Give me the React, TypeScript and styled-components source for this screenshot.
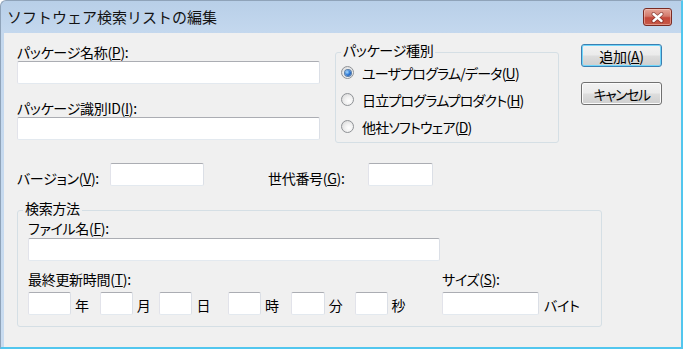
import styled, { createGlobalStyle } from 'styled-components';

const GlobalStyle = createGlobalStyle`
  html, body {
    margin: 0;
    padding: 0;
    background: #ffffff;
  }
  body {
    font-family: "Noto Sans CJK JP", "Noto Sans", sans-serif;
    color: #000000;
  }
`;

const Page = styled.div`
  width: 685px;
  height: 351px;
  overflow: hidden;
  background: #ffffff;
`;

const Window = styled.div`
  box-sizing: border-box;
  width: 683px;
  height: 349px;
  display: flex;
  flex-direction: column;
  background: linear-gradient(180deg, #b8cfe8 0px, #c4d8ee 32px, #c9dcf0 100%);
  border-left: 1px solid #8fa3b9;
  border-top: 1px solid #8fa3b9;
  border-right: 2px solid #52c6ee;
  border-bottom: 2px solid #52c6ee;
  border-top-left-radius: 6px;
`;

const TitleBar = styled.div`
  box-sizing: border-box;
  height: 32px;
  flex: none;
  display: flex;
  justify-content: space-between;
  align-items: flex-start;
  padding: 7px 9px 0 6px;
`;

const Caption = styled.div`
  font-size: 15px;
  line-height: 18px;
  color: #141414;
`;

const CloseButton = styled.div`
  box-sizing: border-box;
  width: 29px;
  height: 18px;
  display: flex;
  align-items: center;
  justify-content: center;
  border: 1px solid #7a2c24;
  border-radius: 3px;
  background: linear-gradient(180deg, #e5a699 0%, #d37a6c 45%, #c4483a 55%, #c75a48 100%);
  box-shadow: inset 0 0 0 1px rgba(255, 220, 210, 0.45);
`;

const Client = styled.div`
  flex: 1;
  margin-left: 3px;
  background: #f0f0f0;
  padding: 10px 0 0 13px;
  font-size: 14px;
  line-height: 18px;
  letter-spacing: -0.3px;
  font-feature-settings: "palt";
`;

const TopSection = styled.div`
  display: flex;
  align-items: flex-start;
`;

const LeftColumn = styled.div`
  width: 303px;
  display: flex;
  flex-direction: column;
`;

const FieldLabel = styled.div<{ $gap?: number; $lh?: number }>`
  margin-top: ${(p) => p.$gap ?? 0}px;
  line-height: ${(p) => p.$lh ?? 18}px;
  white-space: nowrap;
`;

const TextBox = styled.input<{ $w?: number; $gap?: number }>`
  box-sizing: border-box;
  width: ${(p) => (p.$w ? `${p.$w}px` : '100%')};
  height: 23px;
  margin: ${(p) => p.$gap ?? 0}px 0 0 0;
  padding: 0 3px;
  background: #ffffff;
  border: 1px solid;
  border-color: #abadb3 #dbdfe6 #e3e9ef #e2e3ea;
  border-radius: 2px;
  outline: none;
  font: inherit;
  flex: none;
`;

const Group = styled.fieldset<{ $w: number }>`
  box-sizing: border-box;
  width: ${(p) => p.$w}px;
  min-width: 0;
  margin: 0;
  border: 1px solid #d5dfe5;
  border-radius: 3px;
`;

const GroupTitle = styled.legend<{ $shift?: number }>`
  padding: 0 2px 4px;
  margin-left: ${(p) => p.$shift ?? 0}px;
  line-height: 16px;
`;

const TypeGroup = styled(Group)`
  margin: -1px 0 0 15px;
  padding: 0 0 2px 5px;
`;

const RadioList = styled.div`
  margin-top: -3px;
  display: flex;
  flex-direction: column;
`;

const RadioRow = styled.label`
  height: 27px;
  display: flex;
  align-items: center;
  gap: 8px;
  white-space: nowrap;
  letter-spacing: -0.8px;
`;

const RadioDot = styled.span<{ $checked?: boolean }>`
  position: relative;
  box-sizing: border-box;
  width: 13px;
  height: 13px;
  flex: none;
  border-radius: 50%;
  border: 1px solid #8f9296;
  background: radial-gradient(circle at 62% 62%, #ffffff 0%, #f1f1f1 40%, #d2d2d2 100%);
  &::after {
    content: '';
    display: ${(p) => (p.$checked ? 'block' : 'none')};
    position: absolute;
    left: 2.5px;
    top: 2.5px;
    width: 6px;
    height: 6px;
    border-radius: 50%;
    background: radial-gradient(circle at 35% 35%, #a9dcff 0%, #2f7ad6 50%, #123f8f 100%);
    box-shadow: 0 0 0 1px #5a7fa8;
  }
`;

const ButtonColumn = styled.div`
  margin: 1px 0 0 22px;
  display: flex;
  flex-direction: column;
  gap: 15px;
`;

const PushButton = styled.button<{ $default?: boolean; $tight?: boolean }>`
  box-sizing: border-box;
  width: 81px;
  height: 23px;
  padding: 0;
  font: inherit;
  letter-spacing: ${(p) => (p.$tight ? '-1.5px' : '-0.3px')};
  color: #000000;
  border: 1px solid ${(p) => (p.$default ? '#3c7fb1' : '#707070')};
  border-radius: 3px;
  background: linear-gradient(180deg, #f2f2f2 0%, #ebebeb 48%, #dddddd 52%, #cfcfcf 100%);
  box-shadow: inset 0 0 0 1px ${(p) => (p.$default ? '#6fd6fb' : '#fbfbfb')};
`;

const VersionRow = styled.div`
  margin-top: 20px;
  display: flex;
  align-items: flex-start;
`;

const InlineLabel = styled.div<{ $w: number; $gap?: number }>`
  width: ${(p) => p.$w}px;
  margin: 6px 0 0 ${(p) => p.$gap ?? 0}px;
  white-space: nowrap;
`;

const SearchGroup = styled(Group)`
  margin: 13px 0 0 0;
  padding: 0 10px 11px 10px;
`;

const SearchBody = styled.div`
  display: flex;
  flex-direction: column;
`;

const BottomRow = styled.div`
  margin-top: 9px;
  display: flex;
`;

const DateColumn = styled.div`
  width: 414px;
  display: flex;
  flex-direction: column;
`;

const SizeColumn = styled.div`
  display: flex;
  flex-direction: column;
`;

const UnitRow = styled.div`
  margin-top: 4px;
  display: flex;
  align-items: flex-end;
`;

const TimeField = styled.div`
  display: contents;
`;

const Unit = styled.span<{ $after?: number; $before?: number }>`
  margin: 0 ${(p) => p.$after ?? 0}px 1px ${(p) => p.$before ?? 4}px;
  white-space: nowrap;
`;

const CloseGlyph = () => (
  <svg width="13" height="11" viewBox="0 0 13 11">
    <path d="M2.5 2 L10.5 9 M10.5 2 L2.5 9" stroke="#5b1a14" strokeOpacity="0.55" strokeWidth="4" strokeLinecap="round" />
    <path d="M2.5 2 L10.5 9 M10.5 2 L2.5 9" stroke="#ffffff" strokeWidth="2.4" strokeLinecap="round" />
  </svg>
);

const timeFields = [
  { w: 43, unit: '年', after: 11 },
  { w: 33, unit: '月', after: 9 },
  { w: 33, unit: '日', after: 18 },
  { w: 33, unit: '時', after: 12 },
  { w: 34, unit: '分', after: 12 },
  { w: 33, unit: '秒', after: 0 },
];

const packageTypes = [
  { text: 'ユーザプログラム/データ(', key: 'U', checked: true },
  { text: '日立プログラムプロダクト(', key: 'H', checked: false },
  { text: '他社ソフトウェア(', key: 'D', checked: false },
];

export default function App() {
  return (
    <Page>
      <GlobalStyle />
      <Window>
        <TitleBar>
          <Caption>ソフトウェア検索リストの編集</Caption>
          <CloseButton>
            <CloseGlyph />
          </CloseButton>
        </TitleBar>

        <Client>
          <TopSection>
            <LeftColumn>
              <FieldLabel>
                パッケージ名称(<u>P</u>):
              </FieldLabel>
              <TextBox />
              <FieldLabel $gap={15}>
                パッケージ識別ID(<u>I</u>):
              </FieldLabel>
              <TextBox />
            </LeftColumn>

            <TypeGroup $w={224}>
              <GroupTitle>パッケージ種別</GroupTitle>
              <RadioList>
                {packageTypes.map((t) => (
                  <RadioRow key={t.key}>
                    <RadioDot $checked={t.checked} />
                    <span>
                      {t.text}
                      <u>{t.key}</u>)
                    </span>
                  </RadioRow>
                ))}
              </RadioList>
            </TypeGroup>

            <ButtonColumn>
              <PushButton $default>
                追加(<u>A</u>)
              </PushButton>
              <PushButton $tight>キャンセル</PushButton>
            </ButtonColumn>
          </TopSection>

          <VersionRow>
            <InlineLabel $w={93}>
              バージョン(<u>V</u>):
            </InlineLabel>
            <TextBox $w={94} />
            <InlineLabel $w={100} $gap={64}>
              世代番号(<u>G</u>):
            </InlineLabel>
            <TextBox $w={65} />
          </VersionRow>

          <SearchGroup $w={585}>
            <GroupTitle $shift={-5}>検索方法</GroupTitle>
            <SearchBody>
              <FieldLabel $lh={16}>
                ファイル名(<u>F</u>):
              </FieldLabel>
              <TextBox $w={412} $gap={2} />
              <BottomRow>
                <DateColumn>
                  <FieldLabel>
                    最終更新時間(<u>T</u>):
                  </FieldLabel>
                  <UnitRow>
                    {timeFields.map((f) => (
                      <TimeField key={f.unit}>
                        <TextBox $w={f.w} />
                        <Unit $after={f.after}>{f.unit}</Unit>
                      </TimeField>
                    ))}
                  </UnitRow>
                </DateColumn>
                <SizeColumn>
                  <FieldLabel>
                    サイズ(<u>S</u>):
                  </FieldLabel>
                  <UnitRow>
                    <TextBox $w={97} />
                    <Unit $before={5}>バイト</Unit>
                  </UnitRow>
                </SizeColumn>
              </BottomRow>
            </SearchBody>
          </SearchGroup>
        </Client>
      </Window>
    </Page>
  );
}
